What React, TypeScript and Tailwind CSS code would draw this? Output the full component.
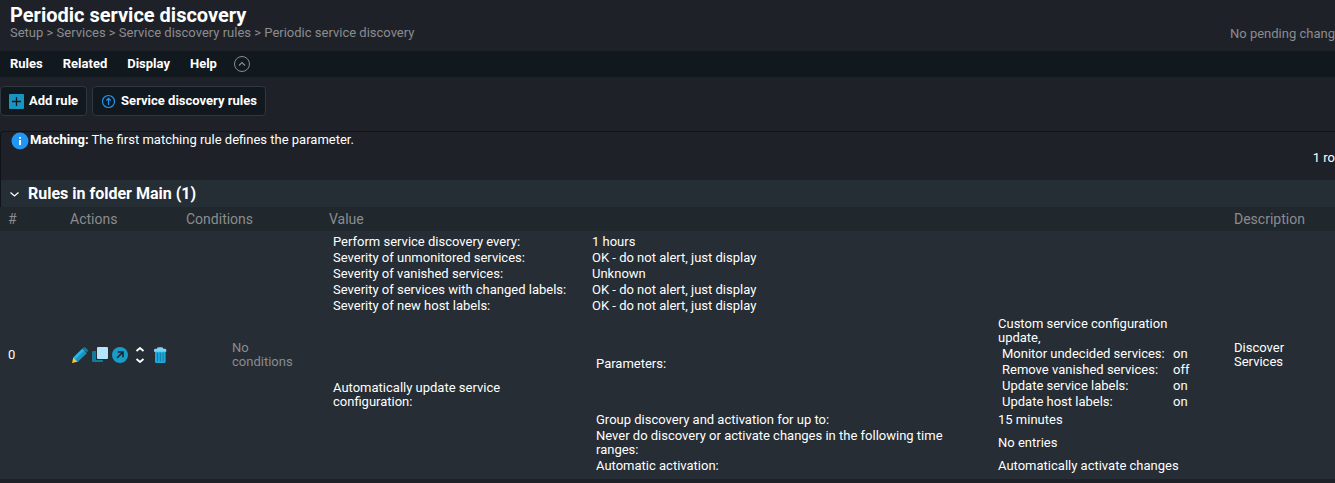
import type { ReactNode } from 'react';

const MENUS = ['Rules', 'Related', 'Display', 'Help'];
const CRUMBS = ['Setup', 'Services', 'Service discovery rules', 'Periodic service discovery'];

type Entry = { label: string; value: ReactNode };

interface ValueTableProps {
  entries: Entry[];
  labelClass: string;
}

/** Label/value listing; values may hold another ValueTable. */
function ValueTable({ entries, labelClass }: ValueTableProps) {
  return (
    <table className="my-px ml-1 border-collapse">
      <tbody>
        {entries.map(e => (
          <tr key={e.label}>
            <th scope="row" className="py-px text-left font-normal whitespace-normal">
              <div className={labelClass}>{e.label}</div>
            </th>
            <td className="py-px whitespace-nowrap">{e.value}</td>
          </tr>
        ))}
      </tbody>
    </table>
  );
}

const UPDATE_PARAMS: Entry[] = [
  { label: 'Monitor undecided services:', value: 'on' },
  { label: 'Remove vanished services:', value: 'off' },
  { label: 'Update service labels:', value: 'on' },
  { label: 'Update host labels:', value: 'on' },
];

const AUTO_UPDATE: Entry[] = [
  {
    label: 'Parameters:',
    value: (
      <>
        <div className="w-48 whitespace-normal">Custom service configuration update,</div>
        <ValueTable entries={UPDATE_PARAMS} labelClass="w-[171px]" />
      </>
    ),
  },
  { label: 'Group discovery and activation for up to:', value: '15 minutes' },
  {
    label: 'Never do discovery or activate changes in the following time ranges:',
    value: 'No entries',
  },
  { label: 'Automatic activation:', value: 'Automatically activate changes' },
];

const RULE_VALUE: Entry[] = [
  { label: 'Perform service discovery every:', value: '1 hours' },
  { label: 'Severity of unmonitored services:', value: 'OK - do not alert, just display' },
  { label: 'Severity of vanished services:', value: 'Unknown' },
  { label: 'Severity of services with changed labels:', value: 'OK - do not alert, just display' },
  { label: 'Severity of new host labels:', value: 'OK - do not alert, just display' },
  {
    label: 'Automatically update service configuration:',
    value: <ValueTable entries={AUTO_UPDATE} labelClass="w-[402px] pr-10" />,
  },
];

function EditIcon() {
  return (
    <svg width="16" height="16" viewBox="0 0 16 16">
      <path d="M1.2 10.6 10.4 1.4 13 4 3.6 13.4z" fill="#29b6e8" />
      <path d="M3 12.8 12.2 3.6 14.8 6.2 5.4 15.2z" fill="#1a95c2" />
      <path d="M10.6 1.2 11.6.5q1-.7 2 .1l1.9 1.9q.8.9.1 1.9l-1 1.2z" fill="#15799c" />
      <path d="M1.3 10.5 5.4 14.7 0 16z" fill="#ffca28" />
    </svg>
  );
}

function CloneIcon() {
  return (
    <svg width="16" height="16" viewBox="0 0 16 16">
      <path d="M1 4h3v9h7v1q0 1-1 1H1q-1 0-1-1V5q0-1 1-1z" fill="#15799c" />
      <rect x="5" y="0" width="11" height="12" rx="1" fill="#b3e5fc" />
    </svg>
  );
}

function ExportIcon() {
  return (
    <svg width="16" height="16" viewBox="0 0 16 16">
      <circle cx="8" cy="8" r="8" fill="#1a9cc9" />
      <path d="M5 11 10.6 5.4M5.8 5h5.2v5.2" fill="none" stroke="#1e262e" strokeWidth="1.6" />
    </svg>
  );
}

function MoveIcon() {
  return (
    <svg width="16" height="16" viewBox="0 0 16 16">
      <path
        d="M4.5 4 8 1 11.5 4M4.5 12 8 15 11.5 12"
        fill="none"
        stroke="#fff"
        strokeWidth="1.8"
      />
    </svg>
  );
}

function DeleteIcon() {
  return (
    <svg width="16" height="16" viewBox="0 0 16 16">
      <path d="M3 4h10.6v10.5q0 1.5-1.5 1.5H4.5Q3 16 3 14.5z" fill="#1fa9dc" />
      <path d="M5.5 6v8.5M8.3 6v8.5M11.1 6v8.5" stroke="#15799c" strokeWidth="1" />
      <path
        d="M2 4.8V3q0-1.3 1.5-1.3H5Q5.3.3 6.5.3h3.2Q11 .3 11.3 1.7h1.5q1.5 0 1.5 1.3v1.8z"
        fill="#7fd3f3"
      />
    </svg>
  );
}

const ACTIONS = [
  { title: 'Edit this rule', Icon: EditIcon },
  { title: 'Clone this rule', Icon: CloneIcon },
  { title: 'Export this rule', Icon: ExportIcon },
  { title: 'Move this rule', Icon: MoveIcon },
  { title: 'Delete this rule', Icon: DeleteIcon },
];

function PageHeader() {
  return (
    <header className="flex h-[51px] items-start justify-between pl-2.5">
      <div>
        <h1 className="pt-1 text-xl leading-[22px] font-bold text-white">
          Periodic service discovery
        </h1>
        <nav aria-label="Breadcrumb" className="text-[13px] leading-[14px] text-[#8b8c8f]">
          {CRUMBS.map((c, i) => (
            <span key={c}>
              {i > 0 && ' > '}
              <a href="#">{c}</a>
            </span>
          ))}
        </nav>
      </div>
      <div className="pt-[27px] text-[13px] leading-[14px] whitespace-nowrap text-[#8b8c8f]">
        No pending chang
      </div>
    </header>
  );
}

function MenuBar() {
  return (
    <nav
      aria-label="Page menu"
      className="flex h-[26px] items-center gap-5 bg-[#11181e] pl-2.5 text-[13px] font-bold text-white"
    >
      {MENUS.map(m => (
        <button key={m} type="button">
          {m}
        </button>
      ))}
      <button type="button" aria-label="Hide suggestions" className="-ml-1">
        <svg width="18" height="18" viewBox="0 0 18 18" fill="none" stroke="#8b8c8f">
          <circle cx="9" cy="9" r="7.5" />
          <path d="M6 10.5 9 7.5 12 10.5" strokeWidth="1.2" />
        </svg>
      </button>
    </nav>
  );
}

function Suggestions() {
  const button =
    'flex h-[30px] items-center gap-[5px] rounded border border-[#2f3740] bg-[#11181e] px-2 text-[13px] font-bold text-white';
  return (
    <div className="flex gap-[5px] pt-[9px] pb-[15px]">
      <button type="button" className={button}>
        <svg width="15" height="15" viewBox="0 0 15 15">
          <rect width="15" height="15" rx="1" fill="#1a95c2" />
          <path d="M3 7.5h9M7.5 3v9" stroke="#11181e" strokeWidth="1.3" />
        </svg>
        Add rule
      </button>
      <button type="button" className={button}>
        <svg width="15" height="15" viewBox="0 0 15 15" fill="none" stroke="#2196f3">
          <circle cx="7.5" cy="7.5" r="6" strokeWidth="1.2" />
          <path d="M7.5 11V4.5M5.3 6.5 7.5 4.3 9.7 6.5" strokeWidth="1.2" />
        </svg>
        Service discovery rules
      </button>
    </div>
  );
}

function RuleTable() {
  return (
    <table className="w-full border-collapse text-left text-[13px] leading-[14px]">
      <thead className="bg-[#20272d] text-sm leading-[14px] text-[#8b8c8f]">
        <tr className="h-6">
          <th className="w-[62px] min-w-[62px] pl-2 font-normal">#</th>
          <th className="w-[116px] min-w-[116px] pl-2 font-normal">Actions</th>
          <th className="w-[143px] min-w-[143px] pl-2 font-normal">Conditions</th>
          <th className="pl-2 font-normal">Value</th>
          <th className="w-[109px] min-w-[109px] pl-2 font-normal">Description</th>
        </tr>
      </thead>
      <tbody className="bg-[#262d34] text-white">
        <tr>
          <td className="pl-2">0</td>
          <td className="pl-2.5">
            <div className="flex gap-1">
              {ACTIONS.map(({ title, Icon }) => (
                <button key={title} type="button" title={title} aria-label={title}>
                  <Icon />
                </button>
              ))}
            </div>
          </td>
          <td className="pr-5 pl-[54px] text-[#8b8c8f]">No conditions</td>
          <td className="py-0.5 pl-2">
            <ValueTable entries={RULE_VALUE} labelClass="w-[259px] pr-4" />
          </td>
          <td className="pr-10 pl-2">Discover Services</td>
        </tr>
      </tbody>
    </table>
  );
}

export default function App() {
  return (
    <div className="min-h-screen overflow-hidden bg-[#1e2228] font-[Roboto,'Liberation_Sans',sans-serif] text-white">
      <PageHeader />
      <MenuBar />
      <Suggestions />
      <main>
        <div className="rounded-tl border-t border-l border-[#101317]">
          <div className="flex h-[18px] items-start gap-px pl-2.5 text-[13px] leading-4">
            <svg width="18" height="18" viewBox="0 0 18 18">
              <circle cx="9" cy="9" r="8.5" fill="#2196f3" />
              <path d="M9 8v5M9 5v1.7" stroke="#fff" strokeWidth="1.8" />
            </svg>
            <p>
              <strong className="font-bold">Matching:</strong> The first matching rule defines the
              parameter.
            </p>
          </div>
          <div className="flex h-[30px] items-start justify-end text-[13px] leading-4">1 ro</div>
          <h2 className="flex h-[27px] items-center bg-[#262e35] pl-2 text-base font-bold">
            <button type="button" className="flex items-center gap-2">
              <svg width="11" height="12" viewBox="0 0 11 12" fill="none" stroke="#fff">
                <path d="M1.5 4.5 5.5 8 9.5 4.5" strokeWidth="1.3" />
              </svg>
              Rules in folder Main (1)
            </button>
          </h2>
        </div>
        <RuleTable />
      </main>
    </div>
  );
}
